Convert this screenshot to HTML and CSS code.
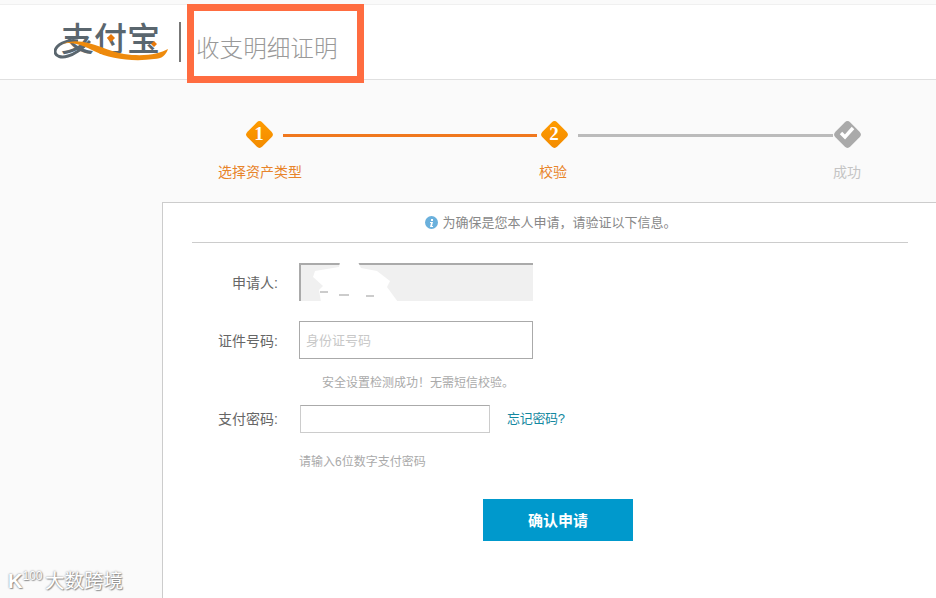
FILE: index.html
```html
<!DOCTYPE html>
<html lang="zh-CN">
<head>
    <meta charset="UTF-8">
    <title>收支明细证明</title>
    <link rel="stylesheet" href="styles.css">
</head>
<body>
<div class="header">
    <div class="logo">
        <span class="logo-text">支付宝</span>
        <svg class="logo-swoosh" width="116" height="42" viewBox="0 0 116 42">
            <path d="M24 20C12 18 2 24 1 30C1 36 8 37 14 35C22 33 30 26 36 20" fill="none" stroke="#5a666e" stroke-width="3"/>
            <path d="M8 23C30 14 50 30 70 33C90 36 105 33 114 28C112 34 108 38 100 38C80 41 55 38 40 30C30 25 18 20 8 23Z" fill="#ee8a0c"/>
            <path d="M57 13l4 4-4 4-4-4zM100 20l3 3-3 3-3-3z" fill="#e8780a"/>
        </svg>
    </div>
    <div class="header-line"></div>
    <h1 class="title">收支明细证明</h1>
</div>
<div class="mark-box"></div>

<div class="steps">
    <div class="step-bar">
        <div class="dot">1</div>
        <div class="bar bar-on"></div>
        <div class="dot">2</div>
        <div class="bar"></div>
        <div class="dot dot-done">
            <svg width="16" height="14" viewBox="0 0 16 14"><path d="M2 7l4 4 8-9" fill="none" stroke="#fff" stroke-width="3.4"/></svg>
        </div>
    </div>
    <div class="step-names">
        <span class="on">选择资产类型</span>
        <span class="on">校验</span>
        <span>成功</span>
    </div>
</div>

<div class="panel">
    <div class="notice">
        <svg class="notice-icon" width="13" height="13" viewBox="0 0 13 13">
            <circle cx="6.5" cy="6.5" r="6.5" fill="#6ab0dc"/>
            <path d="M6 3h2v2H6zM5 6h3l-1 4h1v1H5l1-4H5z" fill="#fff"/>
        </svg>
        为确保是您本人申请，请验证以下信息。
    </div>
    <div class="form">
        <div class="row">
            <label>申请人:</label>
            <div class="field field-off">
                <svg class="blot" width="100" height="40" viewBox="0 0 100 40">
                    <path d="M16 9L40 5L41 0L59 0L62 6L78 9L91 19L88 25L99 40L22 40L20 28L24 24L14 15Z" fill="#fff"/>
                    <path d="M21 30h8M40 33h10M67 34h8" stroke="#999" stroke-width="1"/>
                </svg>
            </div>
        </div>
        <div class="row">
            <label>证件号码:</label>
            <div class="field"><span class="placeholder">身份证号码</span></div>
        </div>
        <p class="tip tip-safe">安全设置检测成功！无需短信校验。</p>
        <div class="row row-pay">
            <label>支付密码:</label>
            <div class="field field-pay"></div>
            <a class="forgot" href="#">忘记密码?</a>
        </div>
        <p class="tip tip-pay">请输入6位数字支付密码</p>
        <button class="submit" type="button">确认申请</button>
    </div>
</div>

<div class="watermark">
    <span class="wm-logo">K<sup>100</sup></span>
    <span>大数跨境</span>
</div>
</body>
</html>
```

FILE: styles.css
```css
* {
    box-sizing: border-box;
}
html,body {
    height: 100%;
}
body {
    margin: 0;
    background-color: #fafafa;
    font: 14px/1.5 "Liberation Sans", "Noto Sans CJK SC", sans-serif;
    color: #666;
    overflow: hidden;
}
h1,p {
    margin: 0;
    padding: 0;
}
a {
    text-decoration: none;
}

/*顶部*/
.header {
    height: 76px;
    margin-top: 4px;
    padding-left: 54px;
    display: flex;
    align-items: center;
    background-color: #fff;
    border-top: 1px solid #f0f0f0;
    border-bottom: 1px solid #e0e0e0;
}
.logo {
    width: 116px;
    height: 42px;
    position: relative;
}
.logo-text {
    display: block;
    padding-left: 7px;
    font-size: 33px;
    line-height: 38px;
    font-weight: 500;
    color: #5a666e;
}
.logo-swoosh {
    position: absolute;
    left: 0;
    top: 0;
}
.header-line {
    width: 2px;
    height: 40px;
    margin-left: 9px;
    background-color: #777;
}
.title {
    margin: 13px 0 0 15px;
    font-size: 23.6px;
    font-weight: 300;
    line-height: 40px;
    color: #999;
}
.mark-box {
    width: 177px;
    height: 79px;
    position: absolute;
    left: 187px;
    top: 4px;
    border: 7px solid #ff6c40;
}

/*步骤条*/
.steps {
    height: 122px;
    padding-top: 40px;
}
.step-bar {
    padding-left: 245px;
    display: flex;
    align-items: center;
    height: 28px;
}
.dot {
    width: 28px;
    height: 28px;
    padding-bottom: 2px;
    position: relative;
    z-index: 0;
    display: flex;
    align-items: center;
    justify-content: center;
    font: 700 19px/1 "Liberation Serif", serif;
    color: #fff;
}
.dot::before {
    content: "";
    width: 21px;
    height: 21px;
    position: absolute;
    left: 3.5px;
    top: 3.5px;
    z-index: -1;
    border-radius: 4px;
    background: linear-gradient(135deg, #ff9c00, #f28a00);
    transform: rotate(45deg);
}
.dot-done::before {
    background: #aaa;
}
.bar {
    width: 255px;
    height: 3px;
    margin: 2px 0 0 10px;
    background-color: #bbb;
}
.bar-on {
    width: 254px;
    margin: 2px 3px 0 10px;
    background-color: #f0781e;
}
.step-names {
    margin-top: 14px;
    padding-left: 218px;
    display: grid;
    grid-template-columns: 321px 294px 28px;
    line-height: 21px;
    white-space: nowrap;
    color: #c4c4c4;
}
.step-names .on {
    color: #e8842a;
}

/*表单*/
.panel {
    margin-left: 162px;
    height: 396px;
    background-color: #fff;
    border-top: 1px solid #ccc;
    border-left: 1px solid #ccc;
}
.notice {
    width: 716px;
    height: 40px;
    margin-left: 29px;
    padding-left: 2px;
    display: flex;
    align-items: center;
    justify-content: center;
    gap: 4px;
    font-size: 13px;
    color: #888;
    border-bottom: 1px solid #ccc;
}
.notice-icon {
    flex: none;
}
.form {
    padding-top: 20px;
}
.row {
    height: 38px;
    margin-bottom: 20px;
    display: flex;
    align-items: center;
}
.row label {
    width: 115px;
    padding-top: 2px;
    text-align: right;
    white-space: nowrap;
}
.field {
    width: 234px;
    height: 38px;
    margin-left: 21px;
    padding: 2px 0 0 6px;
    display: flex;
    align-items: center;
    border: 1px solid #aaa;
}
.field-off {
    position: relative;
    background-color: #f0f0f0;
    border: 0;
    border-top: 2px solid #aaa;
    border-left: 2px solid #aaa;
}
.blot {
    position: absolute;
    left: -2px;
    top: -3px;
}
.placeholder {
    font-size: 13px;
    color: #c8c8c8;
}
.tip {
    font-size: 12px;
    line-height: 18px;
    color: #aaa;
}
.tip-safe {
    margin: -5px 0 0 159px;
}
.row-pay {
    height: 28px;
    margin-top: 13px;
    margin-bottom: 0;
}
.row-pay label {
    padding-top: 0;
}
.field-pay {
    width: 190px;
    height: 28px;
    margin-left: 22px;
    border-color: #ccc;
    border-top-color: #aaa;
}
.forgot {
    margin-left: 17px;
    font-size: 13px;
    letter-spacing: -0.3px;
    color: #1388a0;
}
.tip-pay {
    margin: 20px 0 0 136px;
}
.submit {
    display: block;
    width: 150px;
    height: 42px;
    margin: 28px 0 0 320px;
    padding: 0 0 2px;
    border: 0;
    background-color: #0099cc;
    font: 700 15px "Liberation Sans", "Noto Sans CJK SC", sans-serif;
    color: #fff;
}

/*水印*/
.watermark {
    position: absolute;
    left: 8px;
    top: 567px;
    display: flex;
    align-items: center;
    gap: 2px;
    font-size: 19.5px;
    line-height: 28px;
    color: #fff;
    text-shadow: 0 0 2px #777, 1px 1px 1px #999;
    white-space: nowrap;
}
.wm-logo {
    width: 35px;
    font-weight: 700;
    font-size: 20px;
}
.wm-logo sup {
    font-size: 12px;
    font-weight: 400;
    line-height: 0;
}
```
